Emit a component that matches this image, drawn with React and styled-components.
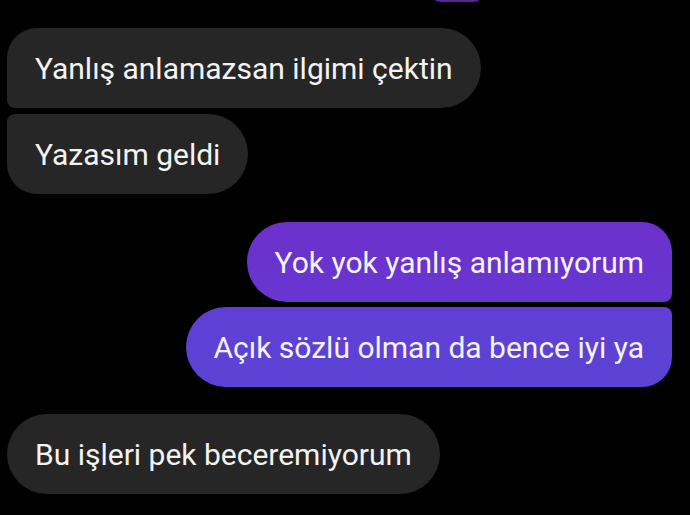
import React from 'react';
import styled, { createGlobalStyle } from 'styled-components';

const GlobalStyle = createGlobalStyle`
  html, body {
    margin: 0;
    padding: 0;
    background: #000;
  }
  body {
    font-family: Roboto, "Noto Sans", sans-serif;
    -webkit-font-smoothing: antialiased;
  }
`;

const Thread = styled.div`
  width: 690px;
  height: 515px;
  overflow: hidden;
  background: #000;
  display: flex;
  flex-direction: column;
  padding: 0 18px 0 7px;
  box-sizing: border-box;
`;

const TopEdge = styled.div`
  align-self: flex-end;
  width: 56px;
  height: 12px;
  margin-top: -10px;
  margin-right: 187px;
  border-radius: 0 0 12px 12px;
  background: #5b2596;
  flex-shrink: 0;
`;

const Bubble = styled.div`
  flex-shrink: 0;
  height: 80px;
  box-sizing: border-box;
  padding: 0 28px;
  display: flex;
  align-items: center;
  align-self: ${(p) => (p.$mine ? 'flex-end' : 'flex-start')};
  margin-top: ${(p) => p.$gap}px;
  border-radius: ${(p) => p.$radius};
  background: ${(p) => p.$bg};
  color: #f3f3f3;
  font-size: 30px;
  white-space: nowrap;
`;

const messages = [
  { text: 'Yanlış anlamazsan ilgimi çektin', gap: 26, radius: '30px 40px 40px 8px', bg: '#262626' },
  { text: 'Yazasım geldi', gap: 6, radius: '8px 40px 40px 30px', bg: '#262626' },
  {
    text: 'Yok yok yanlış anlamıyorum',
    mine: true,
    gap: 28,
    radius: '40px 30px 8px 40px',
    bg: 'linear-gradient(180deg, #6d30cb 0%, #6736d1 100%)',
  },
  {
    text: 'Açık sözlü olman da bence iyi ya',
    mine: true,
    gap: 5,
    radius: '40px 8px 30px 40px',
    bg: 'linear-gradient(180deg, #603fd3 0%, #5b43d6 100%)',
  },
  { text: 'Bu işleri pek beceremiyorum', gap: 27, radius: '40px', bg: '#262626' },
];

const App = () => {
  return (
    <>
      <GlobalStyle />
      <Thread>
        <TopEdge />
        {messages.map((m, i) => (
          <Bubble key={i} $mine={m.mine} $gap={m.gap} $radius={m.radius} $bg={m.bg}>
            {m.text}
          </Bubble>
        ))}
      </Thread>
    </>
  );
};

export default App;
